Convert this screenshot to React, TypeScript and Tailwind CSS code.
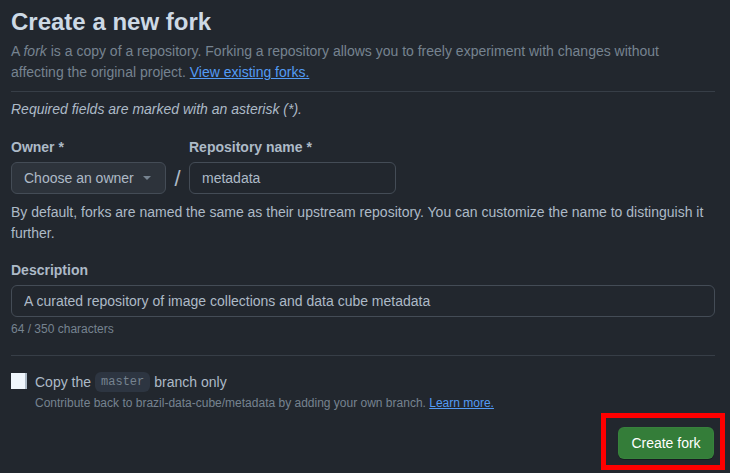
import React from "react";

export default function App() {
  return (
    <div
      className="w-[730px] h-[473px] overflow-hidden bg-[#22272e] text-[#adbac7]"
      style={{ fontFamily: '"Liberation Sans", Arial, sans-serif' }}
    >
      <div className="w-[704px] ml-[11px] pt-[7px]">
        <h2 className="text-[24px] leading-[30px] font-bold text-[#cdd9e5]">Create a new fork</h2>
        <p className="mt-[4px] text-[14px] leading-[21px] text-[#768390]">
          A <em>fork</em> is a copy of a repository. Forking a repository allows you to freely experiment with changes without affecting the original project.{" "}
          <a className="text-[#539bf5] underline">View existing forks.</a>
        </p>
        <div className="mt-[8px] border-t border-[#373e47]" />
        <p className="mt-[7px] text-[14px] leading-[21px] italic text-[#adbac7]">
          Required fields are marked with an asterisk (*).
        </p>

        <div className="mt-[17px] flex items-end">
          <div className="flex flex-col">
            <label className="text-[14px] leading-[21px] font-bold">Owner *</label>
            <button className="mt-[4px] h-[32px] w-[155px] rounded-[6px] border border-[#444c56] bg-[#2d333b] pl-[12px] pr-[10px] flex items-center justify-between text-[14px] text-[#adbac7]">
              <span>Choose an owner</span>
              <svg width="8" height="4" viewBox="0 0 8 4" className="mr-[4px]">
                <path d="M0 0 L8 0 L4 4 Z" fill="#768390" />
              </svg>
            </button>
          </div>
          <span className="w-[23px] h-[32px] flex items-center justify-center text-[22px] text-[#adbac7]">/</span>
          <div className="flex flex-col">
            <label className="text-[14px] leading-[21px] font-bold">Repository name *</label>
            <input
              readOnly
              value="metadata"
              className="mt-[4px] h-[32px] w-[207px] rounded-[6px] border border-[#444c56] bg-[#22272e] px-[12px] text-[14px] text-[#adbac7] outline-none"
            />
          </div>
        </div>
        <p className="mt-[8px] text-[14px] leading-[21px] text-[#adbac7]">
          By default, forks are named the same as their upstream repository. You can customize the name to distinguish it further.
        </p>

        <label className="block mt-[16px] text-[14px] leading-[21px] font-bold">Description</label>
        <input
          readOnly
          value="A curated repository of image collections and data cube metadata"
          className="mt-[4px] h-[32px] w-full rounded-[6px] border border-[#444c56] bg-[#22272e] px-[12px] text-[14px] text-[#adbac7] outline-none"
        />
        <p className="mt-[3px] text-[12px] leading-[18px] text-[#768390]">64 / 350 characters</p>
        <div className="mt-[17px] border-t border-[#373e47]" />

        <div className="mt-[16px] flex items-start">
          <div className="mt-[1px] w-[16px] h-[16px] bg-[#f0f6fc] border-r-[2px] border-[#adbac7] shrink-0" />
          <div className="ml-[8px]">
            <div className="text-[14px] leading-[18px] text-[#adbac7] flex items-center">
              Copy the
              <code
                className="mx-[4px] px-[6px] py-[1px] rounded-[6px] bg-[#2d3541] text-[12px] leading-[18px] text-[#768390]"
                style={{ fontFamily: '"Liberation Mono", "DejaVu Sans Mono", monospace' }}
              >
                master
              </code>
              branch only
            </div>
            <p className="mt-[2px] text-[12px] leading-[18px] text-[#768390]">
              Contribute back to brazil-data-cube/metadata by adding your own branch.{" "}
              <a className="text-[#539bf5] underline">Learn more.</a>
            </p>
          </div>
        </div>

        <div className="mt-[1px] flex justify-end">
          <div className="border-[5px] border-[#ff0000] pt-[9px] pb-[6px] pl-[12px] pr-[6px] mr-[-10px]">
            <button className="h-[32px] w-[96px] rounded-[6px] bg-[#347d39] border border-[#46954a33] text-[14px] text-[#ffffff] shadow-[0_1px_0_rgba(0,0,0,0.3)]">
              Create fork
            </button>
          </div>
        </div>
      </div>
    </div>
  );
}
